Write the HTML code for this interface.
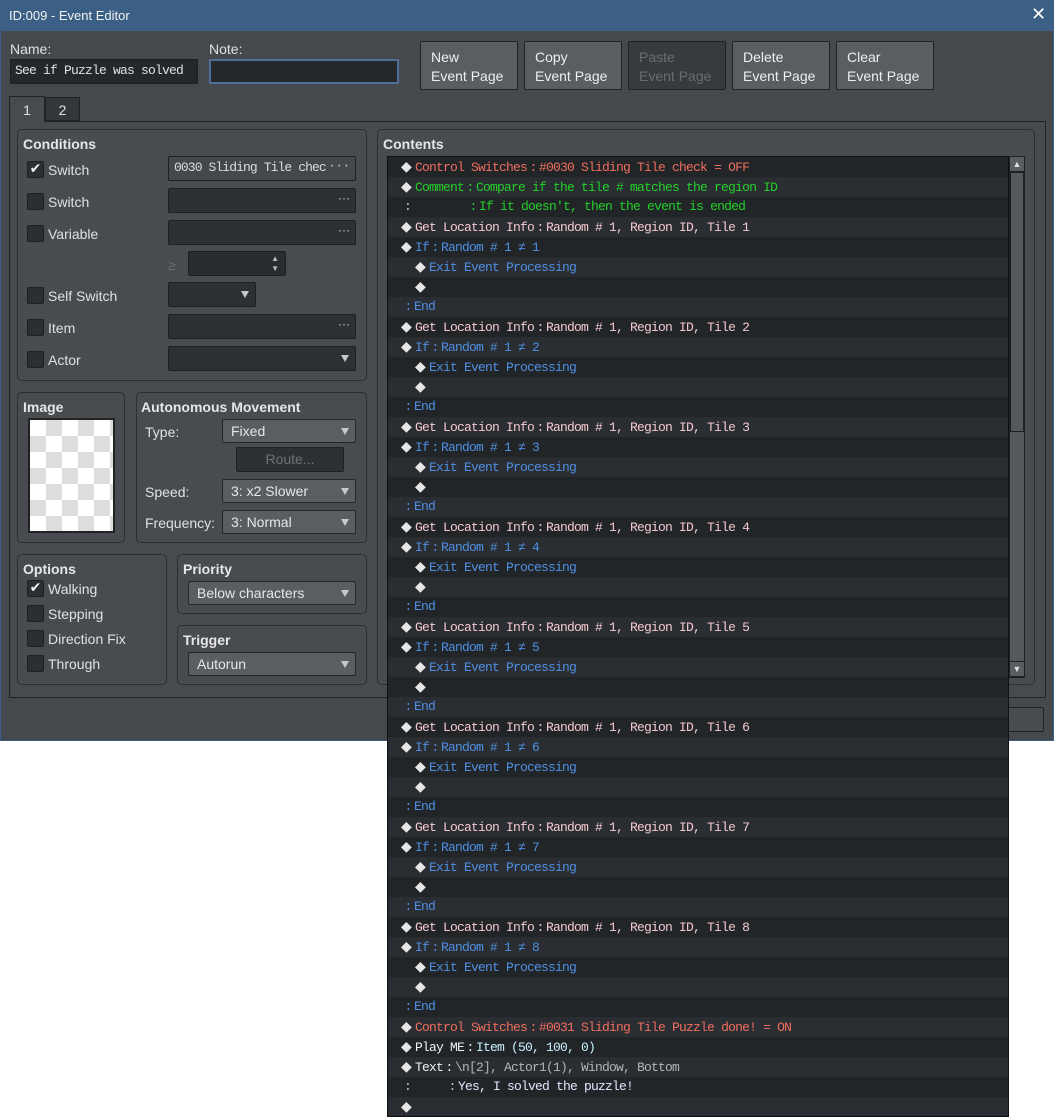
<!DOCTYPE html>
<html><head><meta charset="utf-8"><style>
*{box-sizing:border-box;margin:0;padding:0}
body{width:1054px;height:1117px;background:#fff;position:relative;overflow:hidden;font-family:"Liberation Sans",sans-serif;font-size:14px;color:#e0e0e0}
.a{position:absolute;white-space:nowrap}
#win{left:0;top:0;width:1054px;height:741px;background:#45494d;border:1px solid #3a5e84}
#title{left:0;top:0;width:1054px;height:31px;background:#3b5f85;color:#f2f2f2;font-size:13px;padding:8px 0 0 9px}
.lbl{color:#e0e0e0}
.inp{background:#25282b;border:1px solid #1c1e20;font-family:"Liberation Mono",monospace;font-size:13px;letter-spacing:-0.8px;color:#e0e0e0;padding:3px 4px}
.btn{background:#5a5e62;border:1px solid #222;border-radius:2px;color:#eee;font-size:14px;line-height:19px;padding:6px 0 0 10px}
.gb{border:1px solid #2c2f32;border-radius:5px;background:#484c50}
.gt{font-weight:bold;font-size:14px;color:#e6e6e6;margin-top:2px}
.cb{width:17px;height:17px;background:#2c2f32;border:1px solid #1e2022;border-radius:2px;color:#eee;font-size:14px;line-height:15px;text-align:center;font-family:"DejaVu Sans",sans-serif}
.t{margin-top:1px}
.fld{background:#2e3134;border:1px solid #1e2022;border-radius:2px;color:#ddd;font-size:14px;padding:3px 6px;overflow:hidden}
.dd{background:#5a5e62;border:1px solid #25282a;border-radius:2px;color:#e6e6e6;font-size:14px;padding:3px 8px}
.arr{position:absolute;right:6px;top:8px;width:0;height:0;border-left:4px solid transparent;border-right:4px solid transparent;border-top:7px solid #c8c8c8}
.dots{position:absolute;right:5px;top:2px;color:#ccc;font-size:12px;background:inherit;padding-left:2px}
#list{left:387px;top:156px;width:622px;height:961px;background:#222528;border:1px solid #101113;font-family:"Liberation Mono","DejaVu Sans Mono",monospace;font-size:13px;letter-spacing:-0.8px;overflow:hidden}
.r{height:20px;line-height:20px;white-space:pre;position:relative;padding-left:13px}
.r:nth-child(even){background:#2a2d31}
.d{display:inline-block;width:14px;color:#e6e6e6;font-family:"DejaVu Sans",sans-serif;font-size:14px;letter-spacing:0}
.c{display:inline-block;width:12px;text-align:center}
.i1{padding-left:27px}
.red{color:#ef6e5e}.grn{color:#23d02a}.pk{color:#f3c9cf}.bl{color:#4f90e3}.wh{color:#f0f0f0}.cy{color:#c8f0ff}.gy{color:#b4b4b4}
</style></head><body>
<div id="win" class="a"></div>
<div id="title" class="a">ID:009 - Event Editor</div>
<div class="a" style="left:1031px;top:4px;color:#fff;font-size:18px;font-family:'DejaVu Sans',sans-serif">✕</div>
<div class="a lbl" style="left:10px;top:41px">Name:</div>
<div class="a inp" style="left:10px;top:59px;width:188px;height:25px">See if Puzzle was solved</div>
<div class="a lbl" style="left:209px;top:41px">Note:</div>
<div class="a inp" style="left:209px;top:59px;width:190px;height:25px;border:2px solid #4d6e96"></div>
<div class="a btn" style="left:420px;top:41px;width:98px;height:49px">New<br>Event Page</div>
<div class="a btn" style="left:524px;top:41px;width:98px;height:49px">Copy<br>Event Page</div>
<div class="a btn" style="left:628px;top:41px;width:98px;height:49px;background:#383b3e;color:#6a6d70">Paste<br>Event Page</div>
<div class="a btn" style="left:732px;top:41px;width:98px;height:49px">Delete<br>Event Page</div>
<div class="a btn" style="left:836px;top:41px;width:98px;height:49px">Clear<br>Event Page</div>
<div class="a" style="left:9px;top:121px;width:1037px;height:577px;border:1px solid #222;background:#474b4f"></div>
<div class="a" style="left:9px;top:96px;width:36px;height:26px;background:#474b4f;border:1px solid #222;border-bottom:none;text-align:center;line-height:26px">1</div>
<div class="a" style="left:45px;top:97px;width:35px;height:24px;background:#34373a;border:1px solid #222;text-align:center;line-height:24px">2</div>

<div class="a gb" style="left:17px;top:129px;width:350px;height:252px"></div>
<div class="a gt" style="left:23px;top:134px">Conditions</div>
<div class="a cb" style="left:27px;top:161px">✔</div><div class="a t" style="left:48px;top:161px">Switch</div>
<div class="a fld" style="left:168px;top:156px;width:188px;height:25px;font-family:'Liberation Mono',monospace;font-size:13px;letter-spacing:-0.9px;padding:3px 5px;background:#44474b">0030 Sliding Tile check<span class="dots" style="letter-spacing:0">···</span></div>
<div class="a cb" style="left:27px;top:193px"></div><div class="a t" style="left:48px;top:193px">Switch</div>
<div class="a fld" style="left:168px;top:188px;width:188px;height:25px"><span class="dots">···</span></div>
<div class="a cb" style="left:27px;top:225px"></div><div class="a t" style="left:48px;top:225px">Variable</div>
<div class="a fld" style="left:168px;top:220px;width:188px;height:25px"><span class="dots">···</span></div>
<div class="a" style="left:168px;top:257px;color:#6a6d70">≥</div>
<div class="a fld" style="left:188px;top:251px;width:98px;height:25px;background:#2a2d30"><span class="a" style="right:6px;top:2px;font-size:8px;color:#bbb;line-height:10px">▲<br>▼</span></div>
<div class="a cb" style="left:27px;top:287px"></div><div class="a t" style="left:48px;top:287px">Self Switch</div>
<div class="a fld" style="left:168px;top:282px;width:88px;height:25px"><span class="arr"></span></div>
<div class="a cb" style="left:27px;top:319px"></div><div class="a t" style="left:48px;top:319px">Item</div>
<div class="a fld" style="left:168px;top:314px;width:188px;height:25px"><span class="dots">···</span></div>
<div class="a cb" style="left:27px;top:351px"></div><div class="a t" style="left:48px;top:351px">Actor</div>
<div class="a fld" style="left:168px;top:346px;width:188px;height:25px"><span class="arr"></span></div>

<div class="a gb" style="left:17px;top:392px;width:108px;height:151px"></div>
<div class="a gt" style="left:23px;top:397px">Image</div>
<div class="a" style="left:28px;top:418px;width:87px;height:115px;border:2px solid #222;background-color:#fff;background-image:linear-gradient(45deg,#ddd 25%,transparent 25%,transparent 75%,#ddd 75%),linear-gradient(45deg,#ddd 25%,transparent 25%,transparent 75%,#ddd 75%);background-size:32px 32px;background-position:0 0,16px 16px"></div>
<div class="a gb" style="left:136px;top:392px;width:231px;height:151px"></div>
<div class="a gt" style="left:141px;top:397px">Autonomous Movement</div>
<div class="a" style="left:145px;top:424px">Type:</div>
<div class="a dd" style="left:222px;top:419px;width:134px;height:24px">Fixed<span class="arr"></span></div>
<div class="a fld" style="left:236px;top:447px;width:108px;height:25px;color:#6e7174;text-align:center;background:#2e3134">Route...</div>
<div class="a" style="left:145px;top:484px">Speed:</div>
<div class="a dd" style="left:222px;top:479px;width:134px;height:24px">3: x2 Slower<span class="arr"></span></div>
<div class="a" style="left:145px;top:515px">Frequency:</div>
<div class="a dd" style="left:222px;top:510px;width:134px;height:24px">3: Normal<span class="arr"></span></div>

<div class="a gb" style="left:17px;top:554px;width:150px;height:131px"></div>
<div class="a gt" style="left:23px;top:559px">Options</div>
<div class="a cb" style="left:27px;top:580px">✔</div><div class="a t" style="left:48px;top:580px">Walking</div>
<div class="a cb" style="left:27px;top:605px"></div><div class="a t" style="left:48px;top:605px">Stepping</div>
<div class="a cb" style="left:27px;top:630px"></div><div class="a t" style="left:48px;top:630px">Direction Fix</div>
<div class="a cb" style="left:27px;top:655px"></div><div class="a t" style="left:48px;top:655px">Through</div>
<div class="a gb" style="left:177px;top:554px;width:190px;height:60px"></div>
<div class="a gt" style="left:183px;top:559px">Priority</div>
<div class="a dd" style="left:188px;top:581px;width:168px;height:24px">Below characters<span class="arr"></span></div>
<div class="a gb" style="left:177px;top:625px;width:190px;height:60px"></div>
<div class="a gt" style="left:183px;top:630px">Trigger</div>
<div class="a dd" style="left:188px;top:652px;width:168px;height:24px">Autorun<span class="arr"></span></div>

<div class="a gb" style="left:377px;top:129px;width:658px;height:556px"></div>
<div class="a gt" style="left:383px;top:134px">Contents</div>
<div class="a" style="left:1009px;top:156px;width:16px;height:522px;background:#55595d;border:1px solid #1e2022"></div>
<div class="a" style="left:1009px;top:156px;width:16px;height:16px;background:#5a5e62;border:1px solid #1e2022;color:#ddd;font-size:9px;text-align:center;line-height:14px">▲</div>
<div class="a" style="left:1009px;top:661px;width:16px;height:16px;background:#5a5e62;border:1px solid #1e2022;color:#ddd;font-size:9px;text-align:center;line-height:14px">▼</div>
<div class="a" style="left:1010px;top:172px;width:14px;height:260px;border:1px solid #1e2022;background:#55595d"></div>
<div class="a btn" style="left:942px;top:707px;width:102px;height:25px;background:#484c50;padding:2px 0 0 60px;color:#777">y</div>

<div id="list" class="a">
<div class="r red"><span class="d">◆</span>Control Switches<span class="c">:</span>#0030 Sliding Tile check = OFF</div>
<div class="r grn"><span class="d">◆</span>Comment<span class="c">:</span>Compare if the tile # matches the region ID</div>
<div class="r grn" style="padding-left:16px"><span style="color:#ccc">:</span>        <span class="c">:</span>If it doesn't, then the event is ended</div>
<div class="r pk"><span class="d">◆</span>Get Location Info<span class="c">:</span>Random # 1, Region ID, Tile 1</div>
<div class="r bl"><span class="d">◆</span>If<span class="c">:</span>Random # 1 ≠ 1</div>
<div class="r bl i1"><span class="d">◆</span>Exit Event Processing</div>
<div class="r i1"><span class="d">◆</span></div>
<div class="r bl" style="padding-left:14px"><span class="c">:</span>End</div>
<div class="r pk"><span class="d">◆</span>Get Location Info<span class="c">:</span>Random # 1, Region ID, Tile 2</div>
<div class="r bl"><span class="d">◆</span>If<span class="c">:</span>Random # 1 ≠ 2</div>
<div class="r bl i1"><span class="d">◆</span>Exit Event Processing</div>
<div class="r i1"><span class="d">◆</span></div>
<div class="r bl" style="padding-left:14px"><span class="c">:</span>End</div>
<div class="r pk"><span class="d">◆</span>Get Location Info<span class="c">:</span>Random # 1, Region ID, Tile 3</div>
<div class="r bl"><span class="d">◆</span>If<span class="c">:</span>Random # 1 ≠ 3</div>
<div class="r bl i1"><span class="d">◆</span>Exit Event Processing</div>
<div class="r i1"><span class="d">◆</span></div>
<div class="r bl" style="padding-left:14px"><span class="c">:</span>End</div>
<div class="r pk"><span class="d">◆</span>Get Location Info<span class="c">:</span>Random # 1, Region ID, Tile 4</div>
<div class="r bl"><span class="d">◆</span>If<span class="c">:</span>Random # 1 ≠ 4</div>
<div class="r bl i1"><span class="d">◆</span>Exit Event Processing</div>
<div class="r i1"><span class="d">◆</span></div>
<div class="r bl" style="padding-left:14px"><span class="c">:</span>End</div>
<div class="r pk"><span class="d">◆</span>Get Location Info<span class="c">:</span>Random # 1, Region ID, Tile 5</div>
<div class="r bl"><span class="d">◆</span>If<span class="c">:</span>Random # 1 ≠ 5</div>
<div class="r bl i1"><span class="d">◆</span>Exit Event Processing</div>
<div class="r i1"><span class="d">◆</span></div>
<div class="r bl" style="padding-left:14px"><span class="c">:</span>End</div>
<div class="r pk"><span class="d">◆</span>Get Location Info<span class="c">:</span>Random # 1, Region ID, Tile 6</div>
<div class="r bl"><span class="d">◆</span>If<span class="c">:</span>Random # 1 ≠ 6</div>
<div class="r bl i1"><span class="d">◆</span>Exit Event Processing</div>
<div class="r i1"><span class="d">◆</span></div>
<div class="r bl" style="padding-left:14px"><span class="c">:</span>End</div>
<div class="r pk"><span class="d">◆</span>Get Location Info<span class="c">:</span>Random # 1, Region ID, Tile 7</div>
<div class="r bl"><span class="d">◆</span>If<span class="c">:</span>Random # 1 ≠ 7</div>
<div class="r bl i1"><span class="d">◆</span>Exit Event Processing</div>
<div class="r i1"><span class="d">◆</span></div>
<div class="r bl" style="padding-left:14px"><span class="c">:</span>End</div>
<div class="r pk"><span class="d">◆</span>Get Location Info<span class="c">:</span>Random # 1, Region ID, Tile 8</div>
<div class="r bl"><span class="d">◆</span>If<span class="c">:</span>Random # 1 ≠ 8</div>
<div class="r bl i1"><span class="d">◆</span>Exit Event Processing</div>
<div class="r i1"><span class="d">◆</span></div>
<div class="r bl" style="padding-left:14px"><span class="c">:</span>End</div>
<div class="r red"><span class="d">◆</span>Control Switches<span class="c">:</span>#0031 Sliding Tile Puzzle done! = ON</div>
<div class="r wh"><span class="d">◆</span>Play ME<span class="c">:</span><span class="cy">Item (50, 100, 0)</span></div>
<div class="r wh"><span class="d">◆</span>Text<span class="c">:</span><span class="gy">\n[2], Actor1(1), Window, Bottom</span></div>
<div class="r" style="padding-left:16px;color:#ccc">:     <span class="c">:</span><span style="color:#dfe8ff">Yes, I solved the puzzle!</span></div>
<div class="r"><span class="d">◆</span></div>
</div>
</body></html>
